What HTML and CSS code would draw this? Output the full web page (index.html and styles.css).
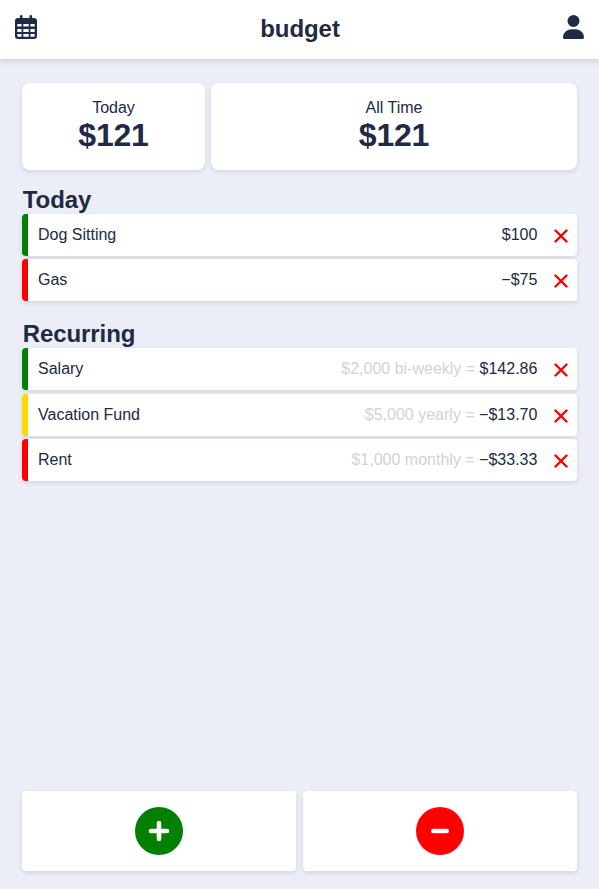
FILE: index.html
```html
<!DOCTYPE html>
<html lang="en">
<head>
<meta charset="utf-8">
<title>budget</title>
<link rel="stylesheet" href="styles.css">
</head>
<body>
<header class="header">
  <svg class="calendar" viewBox="0 0 22 24"><path fill-rule="evenodd" d="M4.900 1.300a1.300 1.300 0 0 1 2.600 0V3h7V1.300a1.300 1.300 0 0 1 2.600 0V3H19a3 3 0 0 1 3 3v15a3 3 0 0 1-3 3H3a3 3 0 0 1-3-3V6a3 3 0 0 1 3-3h1.900zM2.300 9v2.600h4.300V9zM8.300 9v2.600h5.400V9zM15.400 9v2.600h4.300V9zM2.300 14v2.900h4.300V14zM8.300 14v2.900h5.400V14zM15.400 14v2.900h4.300V14zM2.300 19v1.800a1 1 0 0 0 1 1h3.300V19zM8.300 19v2.800h5.400V19zM15.400 19v2.800h3.300a1 1 0 0 0 1-1V19z"/></svg>
  <h1 class="title">budget</h1>
  <svg class="user" viewBox="0 0 448 512"><path d="M224 256a128 128 0 1 0 0-256 128 128 0 1 0 0 256zm-45.700 48C79.800 304 0 383.800 0 482.300 0 498.700 13.300 512 29.700 512h388.600c16.400 0 29.700-13.300 29.700-29.700 0-98.500-79.800-178.300-178.300-178.300z"/></svg>
</header>
<main class="main">
  <section class="totals">
    <div class="card"><p>Today</p><p class="amount">$121</p></div>
    <div class="card"><p>All Time</p><p class="amount">$121</p></div>
  </section>
  <section class="group">
    <h2>Today</h2>
    <ul class="list">
      <li class="row income"><span>Dog Sitting</span><span class="value">$100</span><svg class="remove" viewBox="0 0 14 14"><path d="M1.500 1.500l11 11M12.500 1.500l-11 11"/></svg></li>
      <li class="row expense"><span>Gas</span><span class="value">−$75</span><svg class="remove" viewBox="0 0 14 14"><path d="M1.500 1.500l11 11M12.500 1.500l-11 11"/></svg></li>
    </ul>
  </section>
  <section class="group recurring">
    <h2>Recurring</h2>
    <ul class="list">
      <li class="row income"><span>Salary</span><span class="value"><span class="rate">$2,000 bi-weekly =</span> $142.86</span><svg class="remove" viewBox="0 0 14 14"><path d="M1.500 1.500l11 11M12.500 1.500l-11 11"/></svg></li>
      <li class="row saving"><span>Vacation Fund</span><span class="value"><span class="rate">$5,000 yearly =</span> −$13.70</span><svg class="remove" viewBox="0 0 14 14"><path d="M1.500 1.500l11 11M12.500 1.500l-11 11"/></svg></li>
      <li class="row expense"><span>Rent</span><span class="value"><span class="rate">$1,000 monthly =</span> −$33.33</span><svg class="remove" viewBox="0 0 14 14"><path d="M1.500 1.500l11 11M12.500 1.500l-11 11"/></svg></li>
    </ul>
  </section>
</main>
<footer class="actions">
  <button class="action" aria-label="Add income"><svg viewBox="0 0 48 48"><circle cx="24" cy="24" r="24" fill="green"/><path d="M16 24h16M24 16v16"/></svg></button>
  <button class="action" aria-label="Add expense"><svg viewBox="0 0 48 48"><circle cx="24" cy="24" r="24" fill="red"/><path d="M17.300 24h13.400"/></svg></button>
</footer>
</body>
</html>
```
FILE: styles.css
```css
* { box-sizing: border-box; margin: 0; padding: 0; }

body {
  display: flex;
  flex-direction: column;
  height: 100vh;
  overflow: hidden;
  background: #ebeef7;
  color: #202a44;
  font: 16px/18px "Liberation Sans", Arial, sans-serif;
}

.header {
  display: flex;
  justify-content: space-between;
  align-items: flex-start;
  height: 59px;
  padding: 15px 15px 0;
  background: #fff;
  box-shadow: 0 2px 6px rgba(0, 0, 0, 0.13);
}

.header svg { height: 24px; fill: #202a44; }
.calendar { width: 22px; }
.user { width: 21px; }
.title { font-size: 24px; line-height: 28px; letter-spacing: -0.05px; }

.main { flex: 1; padding: 24px 22px 0; }

.totals {
  display: grid;
  grid-template-columns: 183px 1fr;
  gap: 6px;
}

.card {
  height: 87px;
  padding-top: 16px;
  border-radius: 8px;
  background: #fff;
  box-shadow: 0 2px 5px rgba(0, 0, 0, 0.1);
  text-align: center;
}

.amount { font-size: 32px; font-weight: bold; line-height: 36px; letter-spacing: -0.2px; }

.group { padding-top: 16px; }
.group.recurring { padding-top: 19px; }
.group h2 { font-size: 24px; line-height: 28px; padding-left: 0.8px; letter-spacing: -0.1px; }

.list {
  display: flex;
  flex-direction: column;
  gap: 3.4px;
  list-style: none;
}

.row {
  display: flex;
  align-items: center;
  height: 42px;
  padding: 0 9px 0 10px;
  border-left: 6px solid;
  border-radius: 4px;
  background: #fff;
  box-shadow: 0 2px 5px rgba(0, 0, 0, 0.1);
}

.income { border-left-color: green; }
.expense { border-left-color: red; }
.saving { border-left-color: gold; }

.value { margin-left: auto; }
.rate { color: lightgray; }

.remove {
  width: 14px;
  height: 14px;
  margin: 2px 0 0 16.6px;
  fill: none;
  stroke: red;
  stroke-width: 2.4;
  stroke-linecap: round;
}

.actions {
  display: grid;
  grid-template-columns: 1fr 1fr;
  gap: 7px;
  padding: 0 22px 18px;
}

.action {
  display: flex;
  justify-content: center;
  align-items: center;
  height: 80px;
  border: 0;
  border-radius: 4px;
  background: #fff;
  box-shadow: 0 2px 5px rgba(0, 0, 0, 0.1);
}

.action svg {
  width: 48px;
  height: 48px;
  fill: none;
  stroke-width: 4.6;
  stroke-linecap: round;
}

.action path { stroke: #fff; }
```
